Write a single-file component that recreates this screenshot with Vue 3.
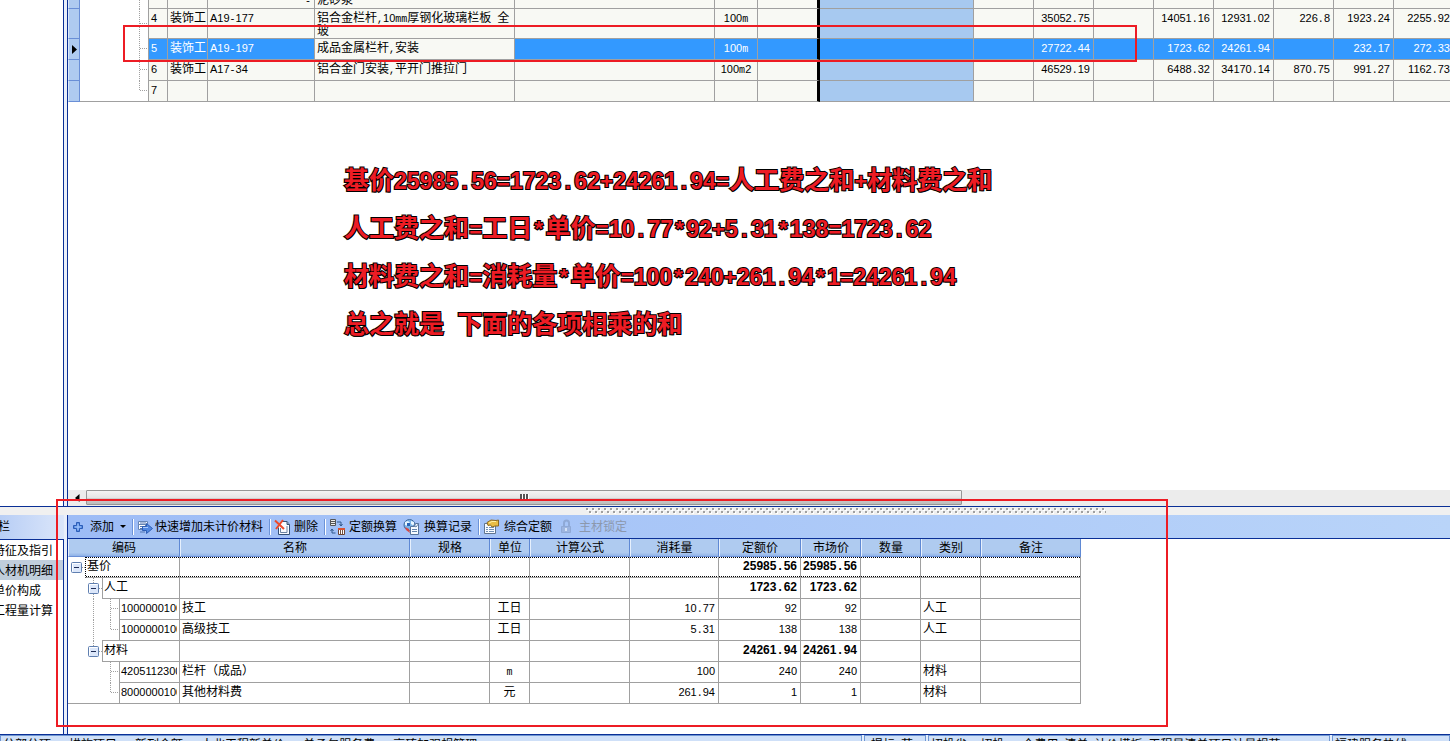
<script setup>
import { h } from 'vue'

// Digits, Latin signs and Chinese runs each get their own face.
const Run = (props) =>
  (props.text.match(/[0-9A-Z]+|[\x20-\x2f\x3a-\x40\x5b-\x7e]+|[^\x20-\x7e]+/g) || []).map((part) =>
    /^[0-9A-Z]/.test(part)
      ? h('span', { class: 'run-digit' }, part)
      : /^[\x20-\x7e]/.test(part)
        ? h('span', { class: 'run-latin' }, part)
        : part
  )
Run.props = ['text']

const items = [
  { no: '', type: '', code: '-', name: '泥砂浆', unit: '', nums: [], kind: 'cut' },
  { no: '4', type: '装饰工', code: 'A19-177', name: '铝合金栏杆,10mm厚钢化玻璃栏板 全玻', unit: '100m', nums: ['', '35052.75', '', '14051.16', '12931.02', '226.8', '1923.24', '2255.92'], kind: 'tall' },
  { no: '5', type: '装饰工', code: 'A19-197', name: '成品金属栏杆,安装', unit: '100m', nums: ['', '27722.44', '', '1723.62', '24261.94', '', '232.17', '272.33'], kind: 'selected' },
  { no: '6', type: '装饰工', code: 'A17-34', name: '铝合金门安装,平开门推拉门', unit: '100m2', nums: ['', '46529.19', '', '6488.32', '34170.14', '870.75', '991.27', '1162.73'], kind: '' },
  { no: '7', type: '', code: '', name: '', unit: '', nums: [], kind: 'last' },
]

const itemHeight = (k) => (k === 'cut' ? 9 : k === 'tall' ? 30 : 21)
const stubY = (k) => (k === 'tall' ? 14 : 9)

const notes = [
  '基价25985.56=1723.62+24261.94=人工费之和+材料费之和',
  '人工费之和=工日*单价=10.77*92+5.31*138=1723.62',
  '材料费之和=消耗量*单价=100*240+261.94*1=24261.94',
  '总之就是 下面的各项相乘的和',
]

const side = ['特征及指引', '人材机明细', '单价构成', '工程量计算']
const heads = ['编码', '名称', '规格', '单位', '计算公式', '消耗量', '定额价', '市场价', '数量', '类别', '备注']

const rows = [
  { level: 0, next: 0, code: '基价', name: '', unit: '', use: '', price: '25985.56', market: '25985.56', kind: '' },
  { level: 1, next: 1, code: '人工', name: '', unit: '', use: '', price: '1723.62', market: '1723.62', kind: '', trunk: 'down' },
  { level: 2, next: 2, code: '10000001001', name: '技工', unit: '工日', use: '10.77', price: '92', market: '92', kind: '人工', trunk: 'full' },
  { level: 2, next: 1, code: '10000001002', name: '高级技工', unit: '工日', use: '5.31', price: '138', market: '138', kind: '人工', trunk: 'full', end: true },
  { level: 1, next: 1, code: '材料', name: '', unit: '', use: '', price: '24261.94', market: '24261.94', kind: '', trunk: 'up' },
  { level: 2, next: 2, code: '42051123001', name: '栏杆（成品）', unit: 'm', use: '100', price: '240', market: '240', kind: '材料' },
  { level: 2, next: -1, code: '80000001001', name: '其他材料费', unit: '元', use: '261.94', price: '1', market: '1', kind: '材料', end: true },
]
const edge = (level) => level * 17 + 17

const statuses = [
  { text: '分部分项:  措施项目:  新列金额:  人北工程新单价:  单承包服务费:  高砖加强规管理', cls: 's1' },
  { text: '提标(营)', cls: 's2' },
  { text: '招投省(V招投___全费用(清单)计价模板(工程量清单项目计量规范(2013-湖', cls: 's3' },
  { text: '福建服务热线', cls: 's4' },
]
</script>

<template>
  <div class="app">
    <div class="upper">
      <div class="blank"></div>
      <div class="gap"></div>
      <div class="sheet">
        <table class="quota">
          <colgroup>
            <col class="q-head" /><col class="q-tree" /><col class="q-no" /><col class="q-type" /><col class="q-code" />
            <col class="q-name" /><col class="q-name" /><col class="q-unit" /><col class="q-mark" /><col class="q-blue" />
            <col v-for="n in 8" :key="n" class="q-num" />
          </colgroup>
          <tbody>
            <tr v-for="(r, i) in items" :key="i" :class="r.kind">
              <th scope="row"><svg v-if="r.kind === 'selected'" class="pointer" width="6" height="9"><path d="M0 0 5 4.500 0 9z" /></svg></th>
              <td class="tree">
                <svg width="68" :height="itemHeight(r.kind)">
                  <path class="dots" :d="r.kind === 'last' ? 'M59.500 0V10' : `M59.500 0V${itemHeight(r.kind)}`" />
                  <path v-if="r.kind !== 'cut'" class="dots" :d="`M60 ${stubY(r.kind)}.500H68`" />
                </svg>
              </td>
              <td class="no"><div><Run :text="r.no" /></div></td>
              <td class="type"><div><Run :text="r.type" /></div></td>
              <td :class="{ right: r.kind === 'cut' }"><div><Run :text="r.code" /></div></td>
              <td class="name"><div><Run :text="r.name" /></div></td>
              <td></td>
              <td class="center"><div><Run :text="r.unit" /></div></td>
              <td class="mark"></td>
              <td class="blue"></td>
              <td v-for="n in 8" :key="n" class="right"><div><Run :text="r.nums[n - 1] || ''" /></div></td>
            </tr>
          </tbody>
        </table>
        <div class="canvas"></div>
        <div class="hscroll">
          <button type="button" class="arrow" aria-label="向左滚动"><svg width="5" height="8"><path d="M4.500 0V8L0 4z" /></svg></button>
          <div class="thumb"><svg width="9" height="7"><path d="M1 0V7M4 0V7M7 0V7" stroke="#555" stroke-width="2" /><path d="M2.500 0V7M5.500 0V7M8.500 0V7" stroke="#fff" /></svg></div>
        </div>
      </div>
    </div>

    <div class="splitter">
      <svg width="520" height="6">
        <defs>
          <pattern id="grip" width="6" height="6" patternUnits="userSpaceOnUse">
            <path d="M1 1h2v2H1zM4 4h2v2H4z" fill="#fff" />
            <path d="M0 0h2v2H0zM3 3h2v2H3z" fill="#a0a0a0" />
          </pattern>
        </defs>
        <rect width="520" height="6" fill="url(#grip)" />
      </svg>
    </div>

    <div class="lower">
      <nav class="side">
        <h2>栏</h2>
        <ul>
          <li v-for="(s, i) in side" :key="s" :class="{ on: i === 1 }"><a href="#">{{ s }}</a></li>
        </ul>
      </nav>
      <div class="gap"></div>
      <section class="detail">
        <div class="tools">
          <button type="button" class="t-add">
            <svg width="10" height="10"><path d="M3.500.5h3v3h3v3h-3v3h-3v-3h-3v-3h3z" fill="#5d8ee0" stroke="#2b5cb8" /><path d="M5 2v6M2 5h6" stroke="#a9cbff" /></svg>
            <span>添加</span>
            <svg class="caret" width="6" height="3"><path d="M0 0h6L3 3z" /></svg>
          </button>
          <i class="sep"></i>
          <button type="button" class="t-fast">
            <svg width="16" height="16"><path d="M1.500 2.500h9v3h-9zM1.500 5.500h7v5h-7z" fill="#fff" stroke="#6685b5" /><path d="M3 4h6M3 7.500h4M3 9.500h3M3 13h5" stroke="#5277b4" /><path d="M5.500 7.500h4v-3l6 5-6 5v-3h-4z" fill="#5389e2" stroke="#2e5eb5" /><path d="M6 8.500h5" stroke="#a9cbff" /></svg>
            <span>快速增加未计价材料</span>
          </button>
          <i class="sep"></i>
          <button type="button">
            <svg width="16" height="16"><path d="M7.500 2.500H13l2.500 3V15.500h-11v-7" fill="#f8fbff" stroke="#345076" /><path d="M6.500 9v4.500h6.500V7" fill="none" stroke="#6c83a2" /><path d="M13 2.500v3h2.500" fill="#9fb3cc" stroke="#345076" /><path d="M1 1.500 10 10M9 1 2 10" stroke="#ee492b" stroke-width="2" /></svg>
            <span>删除</span>
          </button>
          <i class="sep"></i>
          <button type="button">
            <svg width="16" height="16"><path d="M1.500.5h5v6h-5z" fill="#eee" stroke="#555" /><path d="M2 2.500h4M2 4.500h4" stroke="#555" /><path d="M8 3h4v4M10.500 5 12 7l1.500-2M6.500 14H3v-4M1.500 12 3 10l1.500 2" fill="none" stroke="#31598c" /><path d="M9.500 9.500h6v6h-6z" fill="#fff" stroke="#6d4434" /><path d="M9 10h7" stroke="#d85334" stroke-width="2" /><path d="M11.500 11v4M13.500 11v4" stroke="#725243" /></svg>
            <span>定额换算</span>
          </button>
          <button type="button" class="t-log">
            <svg width="17" height="16"><circle cx="6.500" cy="6" r="5.500" fill="#7bb4e8" stroke="#416c9f" /><path d="M2 3l3-1 2 2-2 3-3-1zM8 2l3 1v4l-3-2z" fill="#e9f7ff" /><path d="M4 4h3v3H4z" fill="#2863b5" /><path d="M2 8l4 2 1 4-4-3z" fill="#d64845" /><path d="M7.500 7.500h4l1-3h3v11h-8z" fill="#f8fcff" stroke="#56749c" /><path d="M9 10.500h5M9 12.500h5M10 6l3 2 3-4" fill="none" stroke="#6484ac" /></svg>
            <span>换算记录</span>
          </button>
          <i class="sep"></i>
          <button type="button">
            <svg width="17" height="16"><path d="M1.500 4.500h11v10h-11z" fill="#f9fbff" stroke="#60748e" /><path d="M3 8.500h2M6 8.500h5M3 10.500h2M6 10.500h5M3 12.500h2M6 12.500h5" stroke="#7291b5" /><path d="M4 3.500 8 1l5 .5L15.500 1v6H12L9 8 7.500 6 5 6.500z" fill="#e9bd45" stroke="#8d6a22" /><path d="M6 4l3-1.500h4" fill="none" stroke="#fff0a1" /></svg>
            <span>综合定额</span>
          </button>
          <button type="button" class="t-lock" disabled>
            <svg width="14" height="15"><path d="M4 7V4a2.500 2.500 0 0 1 5 0v3" fill="none" stroke="#8fa9d6" stroke-width="2" /><path d="M1.500 7.500h9v6h-9z" fill="#9db5e0" stroke="#8fa9d6" /><path d="M6 9v3" stroke="#d4e2f7" stroke-width="2" /></svg>
            <span>主材锁定</span>
          </button>
        </div>
        <table class="parts">
          <colgroup><col v-for="(t, i) in heads" :key="t" :class="'p' + i" /></colgroup>
          <thead>
            <tr><th v-for="t in heads" :key="t" scope="col">{{ t }}</th></tr>
          </thead>
          <tbody>
            <tr v-for="(r, i) in rows" :key="i" :class="{ focus: i === 0, bold: r.level < 2 }">
              <td class="code">
                <div class="branch">
                  <svg :width="edge(r.level)" height="21">
                    <path v-if="r.next < r.level" class="rule" :d="`M${edge(r.next)} 20.500H60`" />
                    <path v-if="r.trunk === 'full'" class="dots" d="M25.500 0V21" />
                    <path v-if="r.trunk === 'down'" class="dots" d="M25.500 0V21" />
                    <path v-if="r.trunk === 'up'" class="dots" d="M25.500 0V8" />
                    <g v-if="r.level === 2">
                      <path class="dots" :d="r.end ? 'M42.500 0V10' : 'M42.500 0V21'" />
                      <path class="dots" d="M43 9.500H51" />
                    </g>
                    <g v-else :transform="`translate(${r.level * 17 + 3} 5)`">
                      <path class="dots" d="M11 5.500H14" />
                      <rect x=".5" y=".5" width="10" height="10" rx="1" fill="#dce7fa" stroke="#5f7fb0" />
                      <path d="M1.500 9.500V1.500H9.500" fill="none" stroke="#fff" />
                      <path d="M3 5.500h5" stroke="#1e2c55" />
                    </g>
                  </svg>
                  <span class="label"><b><Run :text="r.code" /></b></span>
                </div>
              </td>
              <td><div><Run :text="r.name" /></div></td>
              <td></td>
              <td class="center"><div><Run :text="r.unit" /></div></td>
              <td></td>
              <td class="right"><div><Run :text="r.use" /></div></td>
              <td class="right"><div><Run :text="r.price" /></div></td>
              <td class="right"><div><Run :text="r.market" /></div></td>
              <td></td>
              <td><div>{{ r.kind }}</div></td>
              <td></td>
            </tr>
          </tbody>
        </table>
      </section>
    </div>

    <footer class="status">
      <span v-for="s in statuses" :key="s.cls" :class="s.cls"><Run :text="s.text" /></span>
    </footer>

    <div class="notes">
      <p v-for="n in notes" :key="n"><Run :text="n" /></p>
    </div>
    <div class="frame frame-row"></div>
    <div class="frame frame-detail"></div>
  </div>
</template>

<style>
body { margin: 0; overflow: hidden; }
.run-digit { font-family: "Liberation Sans", sans-serif; font-size: 11px; line-height: 0; }
.run-latin { font-family: "Liberation Mono", monospace; font-size: 10px; line-height: 0; white-space: pre-wrap; }
.right .run-latin, .no .run-latin { white-space: pre; }
.bold .right .run-digit, .bold .right .run-latin { font-size: 12px; font-weight: bold; }
.notes .run-digit { font-size: 23px; }
.notes .run-latin { font-size: 22px; }
</style>

<style scoped>
.app {
  position: relative;
  display: flex;
  flex-direction: column;
  height: 100vh;
  overflow: hidden;
  background: #fff;
  color: #000;
  font: 12px/13px "Liberation Sans", "Noto Sans CJK SC", sans-serif;
}
.upper { flex: 1; display: flex; min-height: 0; border-bottom: 1px solid #0a2f96; }
.blank { flex: 0 0 63px; border-right: 1px solid #0a2f96; }
.gap { flex: 0 0 3px; background: #e9effa; }
.sheet { flex: 1; min-width: 0; display: flex; flex-direction: column; border-left: 1px solid #0a2f96; overflow: hidden; }
.canvas { flex: 1; }

table { border-collapse: separate; border-spacing: 0; table-layout: fixed; }
td, th { box-sizing: border-box; padding: 0; vertical-align: top; font-weight: normal; }
td > div { padding: 3px 2px 0; }
.center { text-align: center; }
.right { text-align: right; }
.right > div { padding-right: 3px; }
.type { white-space: nowrap; }

.quota { width: 1386px; }
.q-head { width: 12px; }
.q-tree { width: 69px; }
.q-no { width: 19px; }
.q-type { width: 40px; }
.q-code { width: 107px; }
.q-name { width: 200px; }
.q-unit { width: 43px; }
.q-mark { width: 62px; }
.q-blue { width: 154px; }
.q-num { width: 60px; }
.quota td { height: 21px; background: #f8f9f4; border-right: 1px solid #a0a0a0; border-bottom: 1px solid #a0a0a0; }
.quota th { height: 21px; background: #afcbf0; border-right: 1px solid #6a8fd6; border-bottom: 1px solid #6a8fd6; border-left: 1px solid #dce9fb; vertical-align: middle; }
.quota .tree { background: #fff; border-bottom: 0; line-height: 0; }
.quota .last .tree { border-bottom: 1px solid #a0a0a0; }
.tree svg { display: block; }
.last .tree svg { margin-bottom: -1px; }
.quota .tall td, .quota .tall th { height: 30px; }
.quota .cut td, .quota .cut th { height: 9px; }
.cut td > div { height: 8px; padding-top: 0; line-height: 1px; overflow: hidden; }
.quota .mark { border-right: 3px solid #000; }
.quota .blue { background: #a7c9f0; }
.quota .selected td { background: #39f; color: #fff; }
.quota .selected .tree { background: #fff; }
.quota .selected .name { background: #f8f9f4; color: #000; }
.pointer { display: block; margin-left: 3px; }
.dots { fill: none; stroke: #a0a0a0; stroke-dasharray: 1 1; }

.hscroll { flex: 0 0 16px; display: flex; background: #ececec; }
.arrow { flex: 0 0 18px; height: 15px; padding: 0; border: 0; background: none; line-height: 0; }
.thumb { width: calc(64% - 8px); box-sizing: border-box; height: 15px; border: 1px solid #979797; border-radius: 1px; background: linear-gradient(#f4f4f4, #e6e6e6 50%, #cfcfcf 55%, #bcbcbc); display: flex; justify-content: center; padding-top: 3px; }

.splitter { flex: 0 0 8px; display: flex; justify-content: center; padding: 1px 0 0 241px; box-sizing: border-box; background: #f0f0f0; }

.lower { display: flex; border-bottom: 1px solid #0a2f96; }
.side { flex: 0 0 64px; box-sizing: border-box; display: flex; flex-direction: column; overflow: hidden; }
.side h2 { margin: 0; height: 24px; background: linear-gradient(90deg, #b8cef5, #dbe6fa); border-bottom: 1px solid #0a2f96; font-size: 12px; font-weight: normal; line-height: 25px; text-indent: -2px; }
.side ul { flex: 1; margin: 0; padding: 0; list-style: none; border-right: 1px solid #0a2f96; }
.side li { height: 20px; line-height: 22px; white-space: nowrap; overflow: hidden; }
.side a { margin-left: -7px; color: #000; text-decoration: none; }
.side .on { background: #c0cddc; }
.detail { flex: 1; min-width: 0; border-left: 1px solid #0a2f96; padding-bottom: 30px; }
.tools { height: 23px; display: flex; align-items: center; padding-left: 5px; background: linear-gradient(90deg, #9dbcf6, #b9d4f9); border-bottom: 1px solid #0a2f96; }
.tools button { display: flex; align-items: center; gap: 4px; height: 23px; padding: 0 0 0 3px; border: 0; background: none; color: #000; font: inherit; white-space: nowrap; }
.tools button span { padding-top: 2px; }
.tools .t-add { padding-left: 0; gap: 7px; }
.tools .t-fast { gap: 2px; }
.tools .t-log { padding-left: 6px; }
.t-add .caret { margin-left: -1px; }
.sep { width: 1px; height: 16px; margin-left: 6px; background: #6c93d8; border-right: 1px solid #fff; }
.tools .t-lock { padding-left: 8px; gap: 5px; color: #8c98ad; }

.parts { width: 1013px; }
.p0 { width: 112px; }
.p1 { width: 230px; }
.p2 { width: 80px; }
.p3 { width: 40px; }
.p4 { width: 100px; }
.p5 { width: 89px; }
.p6 { width: 82px; }
.p7, .p8, .p9 { width: 60px; }
.p10 { width: 100px; }
.parts th { height: 18px; padding-top: 2px; line-height: 15px; background: linear-gradient(#afcbf0 80%, #8fb2e8); border-left: 1px solid #e6f0fd; border-right: 1px solid #5f89d4; border-bottom: 1px solid #6a8fd6; }
.parts td { height: 21px; border-right: 1px solid #a0a0a0; border-bottom: 1px solid #a0a0a0; }
.parts .code { border-bottom: 0; }
.parts .code > .branch { display: flex; height: 21px; padding: 0; }
.branch svg { flex: none; display: block; }
.rule { stroke: #a0a0a0; }
.label { flex: 1; min-width: 0; border-left: 1px solid #a0a0a0; border-bottom: 1px solid #a0a0a0; padding: 3px 2px 0 1px; }
.label b { display: block; height: 15px; font-weight: normal; overflow: hidden; white-space: nowrap; }
.parts .focus td:not(.code) { background: repeating-linear-gradient(90deg, #000 0 1px, #fff 1px 2px) 0 0 / 100% 1px no-repeat, repeating-linear-gradient(90deg, #000 0 1px, #fff 1px 2px) 0 100% / 100% 1px no-repeat; }
.focus .label { background: repeating-linear-gradient(90deg, #000 0 1px, #fff 1px 2px) 0 0 / 100% 1px no-repeat, repeating-linear-gradient(90deg, #000 0 1px, #fff 1px 2px) 0 100% / 100% 1px no-repeat; border-left: 1px dotted #000; }

.status { flex: 0 0 6px; display: flex; gap: 2px; background: #e4eefc; overflow: hidden; }
.status span { height: 20px; box-sizing: border-box; padding-left: 2px; border: 1px solid #6f96d2; background: #cfe0f8; line-height: 18px; white-space: pre; overflow: hidden; }
.status .s1 { flex: 0 0 862px; word-break: keep-all; }
.status .s2 { flex: 0 0 62px; padding-left: 6px; }
.status .s3 { flex: 0 0 402px; }
.status .s4 { flex: 1; }
.status span :deep(span) { padding: 0; border: 0; background: none; line-height: 0; }

.notes { position: absolute; left: 344px; top: 156px; color: #ed1c24; font-size: 25px; font-weight: bold; line-height: 48px; -webkit-text-stroke: 2px #000; paint-order: stroke fill; text-shadow: 1px 1px 0 #000; white-space: nowrap; }
.notes p { margin: 0; }
.frame { position: absolute; box-sizing: border-box; border: 2px solid #ed1c24; pointer-events: none; }
.frame-row { left: 123px; top: 25px; width: 1014px; height: 37px; }
.frame-detail { left: 56px; top: 499px; width: 1112px; height: 228px; }
</style>
